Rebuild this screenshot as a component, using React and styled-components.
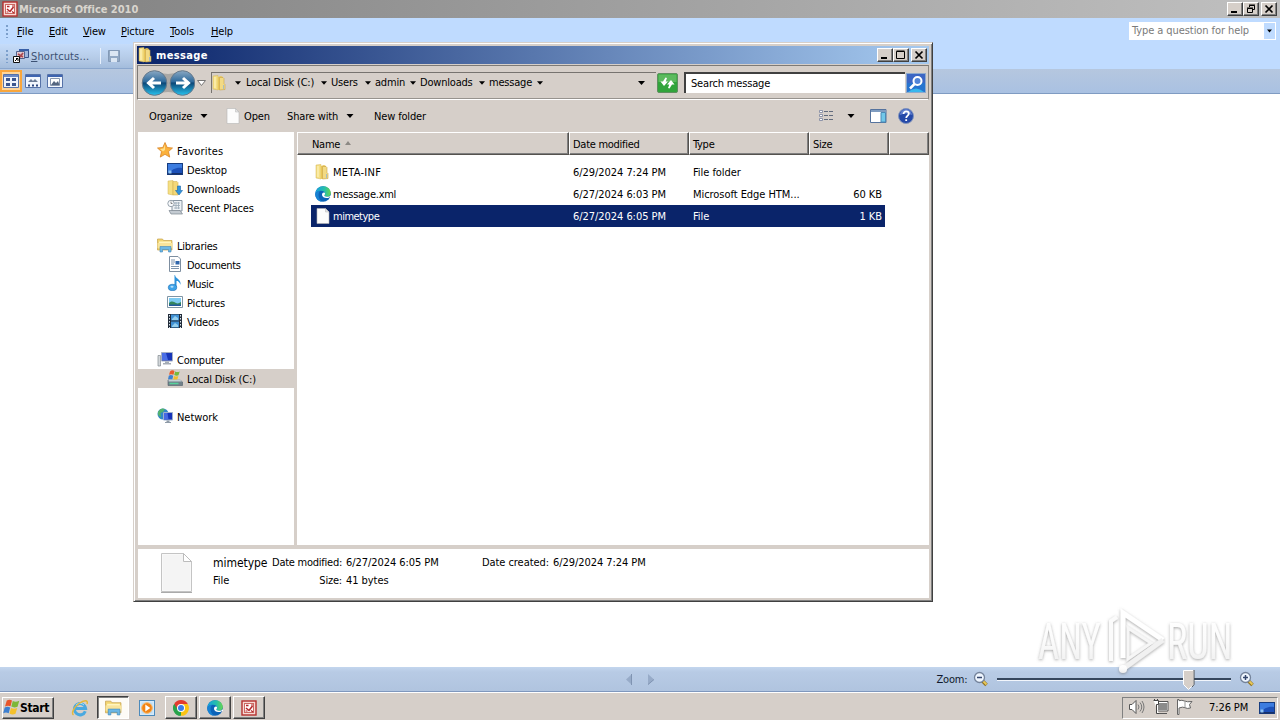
import React from 'react';
import styled, { createGlobalStyle, css } from 'styled-components';

const face = '#d6cfc9';

const GlobalStyle = createGlobalStyle`
    * {
        box-sizing: border-box;
    }
    body {
        margin: 0;
        overflow: hidden;
        font-family: "DejaVu Sans Condensed", "DejaVu Sans", sans-serif;
        font-stretch: condensed;
        font-size: 11px;
        line-height: 14px;
        letter-spacing: -0.2px;
        color: #000;
        white-space: nowrap;
        cursor: default;
    }
    svg {
        display: block;
        flex: none;
    }
`;

const raised = css`
    background: ${face};
    border: 1px solid;
    border-color: #fff #404040 #404040 #fff;
    box-shadow: inset -1px -1px 0 #808080;
`;

/* drops the label a little below the middle, the icon stays above it */
const lowText = css`
    padding-top: 2px;
    & > svg {
        margin-top: -3px;
    }
`;

const Screen = styled.div`
    position: relative;
    display: flex;
    flex-direction: column;
    width: 1280px;
    height: 720px;
    background: #fff;
    overflow: hidden;
`;

/* ---------- Office window ---------- */

const OfficeTitle = styled.header`
    display: flex;
    align-items: center;
    height: 18px;
    padding: 0 3px 0 2px;
    gap: 1px;
    background: linear-gradient(90deg, #808080, #c0c0c0);
    color: #d9d5ce;
`;

const Title = styled.span`
    flex: 1;
    padding-top: 2px;
    font-weight: bold;
    letter-spacing: ${props => props.$spacing || '0.35px'};
`;

const WindowButtons = styled.div`
    display: flex;
    button:last-child {
        margin-left: 2px;
    }
`;

const WindowButton = styled.button`
    ${raised}
    display: flex;
    align-items: center;
    justify-content: center;
    width: 16px;
    height: 14px;
    padding: 0;
`;

const MenuBar = styled.nav`
    display: flex;
    align-items: center;
    height: 26px;
    padding: 0 4px 0 6px;
    background: #bfdbff;
`;

const MenuItem = styled.span`
    width: ${props => props.$width}px;
    padding-top: 2px;
    letter-spacing: ${props => props.$spacing};
    &::first-letter {
        text-decoration: underline;
    }
`;

const Grip = styled.i`
    width: 2px;
    height: 13px;
    margin-right: ${props => props.$after}px;
    background: repeating-linear-gradient(180deg, #7c9fcb 0 2px, transparent 2px 4px);
`;

const HelpBox = styled.div`
    display: flex;
    align-items: center;
    justify-content: space-between;
    width: 147px;
    height: 18px;
    margin-left: auto;
    padding-left: 3px;
    background: #fff;
    color: #7a7a7a;
    letter-spacing: -0.08px;
`;

const HelpArrow = styled.div`
    display: flex;
    align-items: center;
    justify-content: center;
    width: 11px;
    height: 16px;
    margin-right: 1px;
    background: #bfdbff;
`;

const ShortcutBar = styled.div`
    height: 25px;
    background: #bfdbff;
`;

const ShortcutTools = styled.div`
    display: flex;
    align-items: center;
    width: 600px;
    height: 25px;
    padding-left: 6px;
    background: linear-gradient(180deg, #c5dcfa, #b5cbe7 60%, #a3bcdc);
    border-bottom: 1px solid #8aa6cd;
    color: #3c5173;
`;

const ShortcutText = styled.span`
    margin: 0 6px 0 2px;
    padding: 2px 11px 0 0;
    border-right: 1px solid #e8f1fd;
    letter-spacing: 0.12px;
    &::first-letter {
        text-decoration: underline;
    }
`;

const ViewBar = styled.div`
    display: flex;
    align-items: center;
    height: 25px;
    background: linear-gradient(180deg, #b5c7df, #a9c1e2);
    border-bottom: 1px solid #7f9bc2;
`;

const ViewButton = styled.div`
    display: flex;
    align-items: center;
    justify-content: center;
    width: 22px;
    height: 22px;
    ${props => props.$active && css`
        background: #ffd69a;
        border: 2px solid #f9a63c;
    `}
`;

const Canvas = styled.main`
    flex: 1;
    background: #fff;
`;

const StatusBar = styled.footer`
    display: flex;
    align-items: center;
    height: 25px;
    padding: 0 25px 0 625px;
    background: linear-gradient(180deg, #c3d6ee 0, #b8cbe5 20%, #b0c4df);
    border-bottom: 1px solid #8098bd;
    color: #10182c;
`;

const Pager = styled.div`
    display: flex;
    gap: 14px;
    width: 312px;
`;

const ZoomLabel = styled.span`
    width: 37px;
    padding-top: 2px;
`;

const Track = styled.div`
    position: relative;
    width: 234px;
    height: 3px;
    margin: 0 8px 0 8px;
    background: #35465d;
    border-bottom: 1px solid #f2f6fc;
`;

const Thumb = styled.div`
    position: absolute;
    left: 186px;
    top: -8px;
`;

/* ---------- Explorer window ---------- */

const Explorer = styled.section`
    position: absolute;
    left: 133px;
    top: 42px;
    width: 800px;
    height: 560px;
    display: flex;
    flex-direction: column;
    padding: 2px;
    background: ${face};
    border: 1px solid;
    border-color: ${face} #404040 #404040 ${face};
    box-shadow: inset 1px 1px 0 #fff, inset -1px -1px 0 #808080;
`;

const ExplorerTitle = styled.header`
    display: flex;
    align-items: center;
    height: 18px;
    margin: 1px 1px 0;
    padding: 0 2px 0 1px;
    gap: 2px;
    background: linear-gradient(90deg, #0a246a, #a6caf0);
    color: #fff;
`;

const AddressBar = styled.div`
    display: flex;
    align-items: center;
    height: 35px;
    margin: 1px 1px 0 1px;
    padding-left: 3px;
    border: 1px solid;
    border-color: #7d7a76 #8c8984 #fff #7d7a76;
    box-shadow: inset 0 -1px 0 #97938e;
`;

const Path = styled.div`
    display: flex;
    align-items: center;
    width: 445px;
    height: 21px;
    margin-left: 5px;
    border-left: 1px solid #77736f;
    border-top: 1px solid #77736f;
`;

const Crumb = styled.span`
    display: flex;
    align-items: center;
    width: ${props => props.$width}px;
    margin-right: 4px;
    svg {
        margin-left: auto;
    }
`;

const Refresh = styled.div`
    margin: 0 6px 0 1px;
`;

const Search = styled.div`
    width: 221px;
    height: 21px;
    padding: 3px 5px;
    background: #fff;
    border: 1px solid #404040;
    border-width: 2px 0 0 2px;
    margin-right: 1px;
    letter-spacing: -0.18px;
`;

const CommandBar = styled.div`
    display: flex;
    align-items: center;
    height: 32px;
    padding: 0 16px 0 13px;
`;

const Command = styled.span`
    width: ${props => props.$width}px;
    padding-top: 2px;
    letter-spacing: -0.15px;
`;

const ToolIcons = styled.div`
    display: flex;
    align-items: center;
    margin-left: auto;
`;

const Gap = styled.i`
    width: ${props => props.$size}px;
    flex: none;
`;

const Body = styled.div`
    display: flex;
    height: 413px;
    margin-left: 2px;
`;

const NavPane = styled.aside`
    width: 156px;
    padding-top: 9px;
    background: #fff;
`;

const NavRow = styled.div`
    ${lowText}
    display: flex;
    align-items: center;
    gap: 4px;
    height: 19px;
    padding-left: ${props => (props.$child ? 29 : 19)}px;
    letter-spacing: ${props => props.$spacing || '-0.15px'};
    background: ${props => (props.$selected ? face : 'transparent')};
`;

const FilePane = styled.div`
    width: 632px;
    margin-left: 3px;
    background: #fff;
`;

const columns = css`
    display: grid;
    grid-template-columns: ${props => props.$columns};
`;

const HeaderRow = styled.div`
    ${columns}
    height: 23px;
`;

const HeaderCell = styled.div`
    ${raised}
    ${lowText}
    display: flex;
    align-items: center;
    gap: 5px;
    padding-left: ${props => props.$pad || 3}px;
    border-color: #fff #55524e #55524e #fff;
    letter-spacing: -0.28px;
`;

const Files = styled.div`
    padding: 6px 0 0 14px;
`;

const FileRow = styled.div`
    ${columns}
    align-items: center;
    width: 574px;
    height: 22px;
    letter-spacing: -0.05px;
    color: ${props => (props.$selected ? '#fff' : '#000')};
    background: ${props => (props.$selected ? '#0a246a' : 'transparent')};
`;

const FileCell = styled.span`
    padding-top: 2px;
    letter-spacing: ${props => props.$spacing};
`;

const FileName = styled(FileCell)`
    ${lowText}
    display: flex;
    align-items: center;
    gap: 2px;
    padding-left: 4px;
`;

const FileSize = styled(FileCell)`
    padding-right: 3px;
    text-align: right;
`;

const Details = styled.div`
    display: flex;
    height: 49px;
    margin: 4px 1px 0 2px;
    padding: 4px 0 0 23px;
    background: #fff;
`;

const DetailGrid = styled.div`
    display: grid;
    grid-template-columns: 59px 70px 4px 136px 67px 4px auto;
    grid-template-rows: 18px 18px;
    align-items: center;
    margin: 1px 0 0 19px;
    letter-spacing: -0.06px;
`;

const DetailName = styled.span`
    padding-bottom: 1px;
    font-size: 12px;
    letter-spacing: -0.05px;
`;

const DetailLabel = styled.span`
    justify-self: end;
    letter-spacing: ${props => props.$spacing};
`;

/* ---------- Taskbar ---------- */

const Taskbar = styled.div`
    display: flex;
    align-items: center;
    height: 28px;
    padding: 2px 2px 0;
    background: ${face};
    border-top: 1px solid #fff;
`;

const StartButton = styled.button`
    ${raised}
    display: flex;
    align-items: center;
    width: 52px;
    height: 22px;
    padding: 0;
    margin-right: 18px;
    font: bold 12px "DejaVu Sans Condensed", sans-serif;
    letter-spacing: -0.3px;
`;

const TaskIcon = styled.div`
    display: flex;
    align-items: center;
    justify-content: center;
    width: 16px;
    margin-right: ${props => props.$after}px;
`;

const TaskButton = styled.button`
    ${raised}
    display: flex;
    align-items: center;
    justify-content: center;
    width: 32px;
    height: 23px;
    padding: 0;
    margin-right: ${props => props.$after || 2}px;
    ${props => props.$pressed && css`
        background: #fdfbf6;
        border-color: #404040 #fff #fff #404040;
        box-shadow: inset 1px 1px 0 #808080;
    `}
`;

const Tray = styled.div`
    display: flex;
    align-items: center;
    width: 156px;
    height: 22px;
    margin-left: auto;
    padding-left: 5px;
    border: 1px solid;
    border-color: #808080 #fff #fff #808080;
`;

const Clock = styled.span`
    margin: 0 11px 0 16px;
    letter-spacing: -0.1px;
`;

const Watermark = styled.div`
    position: absolute;
    left: 1030px;
    top: 604px;
`;

/* ---------- Icons ---------- */

const Svg = ({ w = 16, h = w, box, children }) => (
    <svg width={w} height={h} viewBox={box || `0 0 ${w} ${h}`}>{children}</svg>
);

const Down = ({ color = '#000', w = 7 }) => (
    <Svg w={w} h={4} box="0 0 7 4"><path d="M0 0h7L3.5 4z" fill={color} /></Svg>
);

const MinimizeGlyph = () => <Svg w={10} h={10}><path d="M1 7h6v2H1z" /></Svg>;
const MaximizeGlyph = () => (
    <Svg w={10} h={10}><path d="M.5 1.5h8v7h-8zM.5 1h8" fill="none" stroke="#000" /></Svg>
);
const RestoreGlyph = () => (
    <Svg w={10} h={10}>
        <path d="M3.5 3V1.5h5v4H7M3 1h6M1.5 4.5h5v4h-5zM1 4h6" fill="none" stroke="#000" />
    </Svg>
);
const CloseGlyph = () => (
    <Svg w={10} h={10}><path d="M1.5 1.5l7 7m0-7l-7 7" stroke="#000" strokeWidth="1.7" /></Svg>
);

const OfficeIcon = () => (
    <Svg>
        <rect x="1" y="1" width="14" height="14" fill="#f6d9d4" stroke="#b5302e" strokeWidth="1.4" />
        <rect x="3.500" y="3.500" width="9" height="9" fill="#fffaf8" stroke="#cc6a62" />
        <path d="M5 5.500h2.500M5 8l3 2.500L11.500 6" fill="none" stroke="#b3262b" strokeWidth="1.500" />
        <path d="M10 5h2M4.500 11h2M10 10.500l2 1.500" stroke="#b3262b" strokeWidth="1.200" />
    </Svg>
);

const FolderIcon = () => (
    <Svg>
        <path d="M1 1l5-.5V15l-5-1z" fill="#f5df83" stroke="#d2b356" strokeWidth=".5" />
        <path d="M6 2l3-1 2 1v12l-5 1z" fill="#e9c658" />
        <path d="M7.500 2.500h3.500l1 1v5l1 1v5l-5.500.5z" fill="#f2da84" stroke="#c9a548" strokeWidth=".6" />
        <path d="M3 2v11" stroke="#fff6c8" />
        <path d="M11.500 10v4" stroke="#a9bcc0" />
    </Svg>
);

const PageIcon = ({ w = 14, h = 16 }) => (
    <Svg w={w} h={h} box="0 0 14 16">
        <path d="M1 .5h8.500L13 4v11.500H1z" fill="#fcfcfc" stroke="#b5b5b5" strokeWidth=".6" />
        <path d="M9.500.5V4H13z" fill="#e3e3e3" stroke="#b5b5b5" strokeWidth=".5" />
    </Svg>
);

const BigPage = () => (
    <Svg w={33} h={41}>
        <path d="M.500.5h22l8 8v30h-30z" fill="#f8f8f8" stroke="#c4c4c4" />
        <path d="M2 37V2h20v7h7v28z" fill="#f4f4f4" />
        <path d="M22.500.5v8h8z" fill="#fff" stroke="#bcbcbc" />
        <path d="M0 39.500h31" stroke="#aaa" />
    </Svg>
);

const EdgeIcon = ({ size = 16 }) => (
    <Svg w={size} box="0 0 16 16">
        <defs>
            <linearGradient id="edgeTop" x1="0" x2="1">
                <stop offset="0" stopColor="#159fe0" />
                <stop offset=".6" stopColor="#27bfa8" />
                <stop offset="1" stopColor="#68d64c" />
            </linearGradient>
        </defs>
        <circle cx="8" cy="8" r="7.800" fill="#0b63b8" />
        <path d="M.3 7.500C1 3 4.200.2 8.200.2c4.400 0 7.500 3.200 7.600 6.700 0 2.400-1.700 3.900-4 3.900-1.600 0-2.500-.6-2.500-1.200 0-.5.8-.8.8-2C10.100 6 8.400 4.700 6 4.700 3 4.700.9 6.200.3 7.500z" fill="url(#edgeTop)" />
        <path d="M7.600 7c-1.100 1.200-.6 3.300.9 4.300 1.800 1.200 4.400 1 6.600-.4l.9.400V9.200c-.9 1.200-2.400 1.600-4.200 1.600-1.600 0-2.500-.6-2.500-1.200 0-.5.8-.8.8-2C10 6.300 8.500 6 7.600 7z" fill="#fff" />
        <path d="M.3 8c.4-2 2.300-3.300 5-3.300C3 6.500 2.500 12 7 15.700 3 15.400 0 12 .3 8z" fill="#1782d3" />
    </Svg>
);

const ChromeIcon = () => (
    <Svg>
        <path d="M8 8L1.200 4A7.800 7.800 0 0 1 14.800 4z" fill="#e23b2e" />
        <path d="M8 8l6.800-4A7.800 7.800 0 0 1 8 15.800z" fill="#fbc413" />
        <path d="M8 8v7.800A7.800 7.800 0 0 1 1.200 4z" fill="#29a34a" />
        <path d="M8 4h6.800L11 10z" fill="#fbc413" />
        <path d="M1.200 4L5 10l3-2V4z" fill="#e23b2e" />
        <path d="M1.200 4l3.300 6 3.500 2-1 3.500A7.800 7.800 0 0 1 1.200 4z" fill="#29a34a" />
        <circle cx="8" cy="8" r="4" fill="#fff" />
        <circle cx="8" cy="8" r="3" fill="#3b7de8" />
    </Svg>
);

const IeIcon = () => (
    <Svg w={18}>
        <path d="M14.300 12.200A5.600 5.600 0 1 1 14.600 9.500H5" fill="none" stroke="#49a9e0" strokeWidth="3" />
        <path d="M5 6a5.500 5.500 0 0 1 8 0" fill="none" stroke="#a7e1f8" />
        <path d="M2.500 16c-2.500-2 .5-8 5.500-11.500S17.500.8 16 5" fill="none" stroke="#e5b83c" strokeWidth="1.500" />
    </Svg>
);

const LibraryIcon = ({ size = 16 }) => (
    <Svg w={size} box="0 0 16 16">
        <path d="M.5 2h5l1 1.500h8.500V13H.5z" fill="#f2d571" stroke="#c6a04b" strokeWidth=".7" />
        <path d="M2 4.500h12v3H2z" fill="#fff5bf" />
        <path d="M.5 6h15v5H.5z" fill="#f8e49b" />
        <path d="M3 15v-5.500h11V15h-2.500v-2.500h-6V15z" fill="#6db8e5" stroke="#3f87bb" strokeWidth=".6" />
    </Svg>
);

const MediaIcon = () => (
    <Svg>
        <rect x=".5" y=".5" width="15" height="15" fill="#d5eafa" stroke="#4c8abb" />
        <rect x="2.500" y="2.500" width="11" height="11" fill="#bcdcf3" />
        <circle cx="8" cy="8" r="5.300" fill="#f08416" stroke="#ffb864" />
        <path d="M6.300 4.500v7l5-3.500z" fill="#fff" />
    </Svg>
);

const FlagIcon = () => (
    <Svg w={17}>
        <path d="M3.800 1.500c2-1 3.500-1 5.200 0L7.500 7.300c-2-1-3.500-.8-5.500.2z" fill="#e8552a" />
        <path d="M9.800 2c2 1 3.700 1 6.500-.3L14.500 7.700c-2.300 1-4.200.9-6.200-.1z" fill="#7db738" />
        <path d="M1.700 8.500c2-1 3.700-.9 5.500 0L5.700 14.300c-2-1-3.500-1-5.500 0z" fill="#3d7fd0" />
        <path d="M8 9c2 1 4 1 6.200 0l-1.700 5.700c-2.200 1.200-4 .9-6-.1z" fill="#f5c12b" />
    </Svg>
);

const StarIcon = () => (
    <Svg>
        <path d="M8 .5l2.200 5 5.300.5-4 3.600 1.200 5.500L8 12.300l-4.700 2.800 1.200-5.500L.5 6l5.300-.5z" fill="#fbb13b" stroke="#d98425" strokeWidth=".8" />
        <path d="M8 2.500L6.500 6.500l-3.500.4 3 2.500L8 8z" fill="#ffe08a" />
    </Svg>
);

const DesktopIcon = ({ w = 16, h = 16 }) => (
    <Svg w={w} h={h} box="0 0 16 16">
        <rect x=".5" y="2.500" width="15" height="11" fill="#1c50b8" stroke="#173d80" />
        <path d="M1 3h14v4C9 6 5 9 1 12z" fill="#3d7de0" />
        <path d="M1 12h14v1.500H1z" fill="#16316a" />
        <path d="M1.500 9.500h3v3h-3z" fill="#8ec3f0" />
    </Svg>
);

const DownloadsIcon = () => (
    <Svg>
        <path d="M1 1l5-.5V15l-5-1z" fill="#f5df83" stroke="#d2b356" strokeWidth=".5" />
        <path d="M6 1.500h4l1 1V15H6z" fill="#f4d878" stroke="#cda944" strokeWidth=".5" />
        <path d="M10.500 6h3v4.500h2L12 15l-3.500-4.500h2z" fill="#3294de" stroke="#1c68aa" strokeWidth=".6" />
    </Svg>
);

const RecentIcon = () => (
    <Svg>
        <path d="M5 1.500h10V12H5z" fill="#eef2f5" stroke="#8794a0" />
        <path d="M7 4h6M7 6.500h6M7 9h6M9 3v7M11.500 3v7" stroke="#9aa9b6" strokeWidth=".8" />
        <path d="M2 11.500h11l2.500 3.500H4z" fill="#c4cbd2" stroke="#7c8790" strokeWidth=".7" />
        <circle cx="4" cy="4.500" r="3.200" fill="#f8fafc" stroke="#97a3ad" />
        <path d="M4 2.500v2h1.500" fill="none" stroke="#555" strokeWidth=".7" />
    </Svg>
);

const DocumentIcon = () => (
    <Svg>
        <path d="M2.500.5h8.500L13.500 3v12.500h-11z" fill="#fff" stroke="#7d8ea0" />
        <path d="M4 4h4M4 6h4M4 10.500h8M4 12.500h8" stroke="#7c94ae" />
        <path d="M8.500 5h4v3.500h-4z" fill="#2f66ac" />
        <path d="M4 8h3" stroke="#7c94ae" />
    </Svg>
);

const MusicIcon = () => (
    <Svg>
        <path d="M8 0c.5 4 6.500 4 5.500 10C12.500 6.500 10.500 6 9.500 6v6.500H7.500V0z" fill="#2d93dc" />
        <ellipse cx="5.500" cy="12.500" rx="4.200" ry="3.200" fill="#3ca2e8" stroke="#1d6fb4" strokeWidth=".6" />
        <ellipse cx="5" cy="11.700" rx="1.600" ry="1" fill="#b5e0fa" />
    </Svg>
);

const PictureIcon = () => (
    <Svg>
        <path d="M.5 2.500h15v11H.5z" fill="#fff" stroke="#7f95a5" />
        <path d="M2 4h12v8H2z" fill="#7ecbf2" />
        <path d="M2 9c3-3 5-1 7 0s3 0 5-1v4H2z" fill="#34865d" />
        <path d="M2 10.500h12V12H2z" fill="#235aa0" />
    </Svg>
);

const VideoIcon = () => (
    <Svg>
        <path d="M1 1h14v14H1z" fill="#222c3a" />
        <path d="M4 1.500h8v6H4zM4 8.500h8v6H4z" fill="#4191d4" />
        <path d="M5 6l3-3 3 2v2H5zM5 13l3-3 3 2v2H5z" fill="#94cfee" />
        <path d="M2.500 2v13M13.500 2v13" stroke="#dbe6ee" strokeDasharray="1.500 1.500" />
    </Svg>
);

const ComputerIcon = () => (
    <Svg>
        <path d="M1 4.500h2.500V15H1z" fill="#d3d7da" stroke="#83898f" strokeWidth=".7" />
        <path d="M4.500 1.500h11v8.500h-11z" fill="#1836b8" stroke="#a4afc4" />
        <path d="M5 2h4l2 7H5z" fill="#4a6ee6" />
        <path d="M8 10.500h4V12h2v1.500H6V12h2z" fill="#a5acb5" />
    </Svg>
);

const DiskIcon = () => (
    <Svg>
        <path d="M1 10h12l2.500 2V15.500H1z" fill="#71818a" stroke="#4c5d68" strokeWidth=".6" />
        <path d="M1.500 9.500h11.500l2 2H1.500z" fill="#c3d0d4" />
        <path d="M2.500 13.500h9" stroke="#56d39b" strokeWidth="1.500" />
        <path d="M3 1.500q2-2 4.500-.5L6.500 4.800Q4 3.500 2 4.800z" fill="#ea5b2d" />
        <path d="M8.200 1.500q2 1.200 4.500 0L11.500 5.300Q9.500 6.300 7.200 5z" fill="#77b93d" />
        <path d="M1.800 5.700Q3.800 4.500 6.200 5.700l-.8 3.500H1z" fill="#3c80d1" />
        <path d="M7 6q2 1 4.300 0L10.300 9.500H6.200z" fill="#f4bd27" />
    </Svg>
);

const NetworkIcon = () => (
    <Svg>
        <circle cx="6" cy="6" r="5.500" fill="#3187c8" />
        <path d="M1 4c2-4 5-4 7-3L6 4 3.500 5 4 9C1.500 8.500.5 6.500 1 4z" fill="#52b26f" />
        <path d="M6.500 4.500h9V12h-9z" fill="#1734ba" stroke="#9fb1cc" />
        <path d="M7 5h3.500l1 6.500H7z" fill="#4869e2" />
        <path d="M9.500 12.500h3V14h1.500v1H8v-1h1.500z" fill="#8f9ba8" />
    </Svg>
);

const NavArrows = () => (
    <Svg w={54} h={28}>
        <defs>
            <linearGradient id="orb" x1="0" y1="0" x2="0" y2="1">
                <stop offset="0" stopColor="#8aa8c3" />
                <stop offset=".45" stopColor="#2e6a9c" />
                <stop offset=".5" stopColor="#0d4777" />
                <stop offset="1" stopColor="#27c2ee" />
            </linearGradient>
        </defs>
        <path d="M13 2q14 6 28 0v24q-14-6-28 0z" fill="#aaa8a5" />
        <circle cx="13.500" cy="14" r="12.300" fill="url(#orb)" stroke="#66798b" />
        <circle cx="41.500" cy="14" r="12.300" fill="url(#orb)" stroke="#66798b" />
        <path d="M20 14H8m5-5l-5.500 5 5.500 5M35 14h12m-5-5l5.500 5-5.500 5" fill="none" stroke="#fff" strokeWidth="3" />
    </Svg>
);

const RefreshIcon = () => (
    <Svg w={21} h={20}>
        <rect x=".5" y=".5" width="20" height="19" rx="1.500" fill="#31a43b" stroke="#5f8f60" />
        <path d="M1.500 1.500h18V9h-18z" fill="#5cba5e" />
        <path d="M8.500 4.500L6 8.500H3.500L7 13l4-4.500H8.700L10 5zM12.500 15.500l2.500-4h2.500L14 7l-4 4.500h2.300L11 15z" fill="#fff" />
    </Svg>
);

const SearchIcon = () => (
    <Svg w={20} h={20}>
        <rect x=".5" y=".5" width="19" height="19" fill="#2674cf" stroke="#8ca9cd" />
        <path d="M1 1h18v9H1z" fill="#3c66c4" />
        <path d="M2 19q8-7 16 0z" fill="#37b7ed" />
        <circle cx="11.500" cy="8" r="4" fill="#5285d8" stroke="#fff" strokeWidth="2" />
        <path d="M8.500 11L4 15.500" stroke="#fff" strokeWidth="2.500" />
    </Svg>
);

const ViewListIcon = () => (
    <Svg>
        <path d="M.500 2.500h3v2h-3zM.500 6.500h3v2h-3zM.500 10.500h3v2h-3z" fill="#fff" stroke="#77809a" strokeWidth=".8" />
        <path d="M5 3.500h10M5 7.500h10M5 11.500h10" stroke="#626b7c" strokeDasharray="4 1" />
    </Svg>
);

const PreviewIcon = () => (
    <Svg w={17} h={14}>
        <path d="M.5.5h15.500v13H.5z" fill="#fff" stroke="#55739e" />
        <path d="M1 1h15v2H1z" fill="#7f9cc0" />
        <path d="M11 3.500h4.500v9.500H11z" fill="#71c7e9" stroke="#4b8ab6" />
    </Svg>
);

const HelpIcon = () => (
    <Svg>
        <circle cx="8" cy="8" r="7.500" fill="#2549a8" stroke="#8295bd" />
        <path d="M2 7a6 6 0 0 1 12 0q-6-3-12 0z" fill="#617fce" />
        <path d="M5.500 6c0-3.500 5.300-3.200 5.300-.3C10.800 7.500 8.200 7.800 8.200 10M8.200 11.300v1.700" fill="none" stroke="#fff" strokeWidth="1.800" />
    </Svg>
);

const ShortcutIcon = () => (
    <Svg w={17}>
        <path d="M7.500 1.500h9v8h-9z" fill="#9db5de" stroke="#375187" />
        <path d="M7 1h10v2H7z" fill="#375fa8" />
        <path d="M4.500 3.500h8v7h-8z" fill="#e3c9cf" stroke="#52618c" />
        <path d="M6 6l5 3M11 5l-4 5" stroke="#a94850" strokeWidth="1.700" />
        <path d="M1.500 8.500h6v6h-6z" fill="#fff" stroke="#111" />
        <path d="M3 13l3-3M4 10.500h2V13" fill="none" stroke="#000" />
    </Svg>
);

const SaveIcon = () => (
    <Svg w={14}>
        <path d="M1.500 1.500h11v11h-11z" fill="#91a8c4" stroke="#8299b6" />
        <path d="M3 2h8v5H3zM4 9h6v4H4z" fill="#dbe6f3" />
    </Svg>
);

const ThumbsIcon = () => (
    <Svg w={16} h={14}>
        <path d="M.5.5h15v13H.5z" fill="#eef3fb" stroke="#5672a8" />
        <path d="M1 1h14v2H1z" fill="#6b8ac6" />
        <path d="M3 4h4v3H3zM9 4h4v3H9zM3 9h4v3H3zM9 9h4v3H9z" fill="#3b568e" />
    </Svg>
);

const FilmstripIcon = () => (
    <Svg w={16} h={14}>
        <path d="M.5.5h15v13H.5z" fill="#f3f7fd" stroke="#5672a8" />
        <path d="M1 1h14v2H1z" fill="#3e64b0" />
        <path d="M3 8l3-3 2 2 2-2 3 3z" fill="#6d7d96" />
        <path d="M3 10.500h2v2H3zM7 10.500h2v2H7zM11 10.500h2v2h-2z" fill="#2e487e" />
    </Svg>
);

const SingleIcon = () => (
    <Svg w={16} h={14}>
        <path d="M.5.5h15v13H.5z" fill="#f3f7fd" stroke="#5672a8" />
        <path d="M1 1h14v2H1z" fill="#3e64b0" />
        <path d="M3.500 4.500h9v7h-9z" fill="#fff" stroke="#8796ae" />
        <path d="M4 11l3-4 2 2 2-2 1.500 4z" fill="#54657f" />
    </Svg>
);

const Magnifier = ({ plus }) => (
    <Svg w={16}>
        <path d="M9.500 10l4 4" stroke="#8f6f1c" strokeWidth="3.500" />
        <path d="M10 10l3.500 3.500" stroke="#e8c95a" strokeWidth="1.800" />
        <circle cx="6.500" cy="6.500" r="5" fill="#eff6ff" stroke="#74839b" strokeWidth="1.300" />
        <path d={plus ? 'M4 6.500h5M6.500 4v5' : 'M4 6.500h5'} stroke="#35476d" strokeWidth="1.500" />
    </Svg>
);

const SpeakerIcon = () => (
    <Svg w={17}>
        <path d="M1.500 5.500h2.500l4-4v13l-4-4H1.500z" fill="#fff" stroke="#555" />
        <path d="M10 5.500q2 2.500 0 5M12 3.500q3.500 4.500 0 9M14 2q4 6 0 12" fill="none" stroke="#777" />
    </Svg>
);

const LanIcon = () => (
    <Svg w={17}>
        <path d="M5.500 3.500h10v8h-10z" fill="#8b8b8b" stroke="#fff" />
        <path d="M4.500 2.500h11.500v9.500H4.500zM6 14.500h9" fill="none" stroke="#555" />
        <path d="M1.500 1.500h5v4h-2v9H7" fill="#fff" stroke="#444" />
        <path d="M2.500 0v2M5.500 0v2" stroke="#444" />
    </Svg>
);

const ActionFlag = () => (
    <Svg w={17}>
        <path d="M1.500.5H3v1.200q3-1 5.500.3T16 2.500l-2.500 3 1 3.500q-3.500 1-5.500-.3T3 9v6.500H1.500z" fill="#fff" stroke="#666" />
        <path d="M9 2v6.500" stroke="#999" />
    </Svg>
);

const PagerArrow = ({ flip }) => (
    <Svg w={8} h={11}>
        <path d={flip ? 'M1 0l6 5.500L1 11z' : 'M7 0L1 5.500 7 11z'} fill="#97abc8" />
        <path d={flip ? 'M1 10.500l6-5' : 'M6.500 0v11'} stroke="#8094b2" />
    </Svg>
);

const SliderThumb = () => (
    <Svg w={12} h={20}>
        <path d="M.5.5h10v14l-5 5-5-5z" fill={face} stroke="#fff" />
        <path d="M11 0v14.500L9 17" fill="none" stroke="#4f4f4f" />
    </Svg>
);

const Logo = () => (
    <svg width="220" height="74" viewBox="0 0 220 74" overflow="visible">
        <defs>
            <filter id="soft" x="-10%" y="-10%" width="120%" height="120%">
                <feDropShadow dx="0" dy="1" stdDeviation="1.500" floodColor="#777" floodOpacity=".65" />
            </filter>
            <linearGradient id="fade" x1="0" y1="0" x2="0" y2="1">
                <stop offset="0" stopColor="#fff" />
                <stop offset=".5" stopColor="#fbfbfb" />
                <stop offset="1" stopColor="#ececec" />
            </linearGradient>
        </defs>
        <g filter="url(#soft)" fill="url(#fade)" fontFamily="Roboto" fontSize="50" letterSpacing="0">
            <text transform="translate(8 55) scale(.735 1)">ANY</text>
            <text transform="translate(137 55) scale(.765 1)">RUN</text>
            <path d="M81 57V17l6-4" fill="none" stroke="#fbfbfb" strokeWidth="4" />
            <path d="M93 54V9l40 27" fill="none" stroke="#fff" strokeWidth="5" />
            <path d="M133 36L93 65" fill="none" stroke="#f1f1f1" strokeWidth="5" />
            <path d="M98 24l23 15-23 16z" fill="none" stroke="#f6f6f6" strokeWidth="3" />
            <circle cx="93" cy="65" r="4" />
        </g>
    </svg>
);

/* ---------- Data ---------- */

const menus = [
    ['File', 32, '0px'], ['Edit', 34, '-0.2px'], ['View', 38, '-0.2px'],
    ['Picture', 49, '-0.1px'], ['Tools', 41, '0px'], ['Help', 30, '-0.2px'],
];

const crumbs = [
    ['Local Disk (C:)', 81], ['Users', 40], ['admin', 41], ['Downloads', 65], ['message', 54],
];

const places = [
    { name: 'Favorites', icon: StarIcon, spacing: '0.2px' },
    { name: 'Desktop', icon: DesktopIcon, child: true },
    { name: 'Downloads', icon: DownloadsIcon, child: true },
    { name: 'Recent Places', icon: RecentIcon, child: true },
    null,
    { name: 'Libraries', icon: LibraryIcon, spacing: '-0.25px' },
    { name: 'Documents', icon: DocumentIcon, child: true, spacing: '-0.3px' },
    { name: 'Music', icon: MusicIcon, child: true, spacing: '-0.3px' },
    { name: 'Pictures', icon: PictureIcon, child: true },
    { name: 'Videos', icon: VideoIcon, child: true },
    null,
    { name: 'Computer', icon: ComputerIcon, spacing: '-0.25px' },
    { name: 'Local Disk (C:)', icon: DiskIcon, child: true, selected: true },
    null,
    { name: 'Network', icon: NetworkIcon, spacing: '-0.05px' },
];

const files = [
    { name: 'META-INF', icon: FolderIcon, date: '6/29/2024 7:24 PM', type: 'File folder', size: '', spacing: '0.25px' },
    { name: 'message.xml', icon: EdgeIcon, date: '6/27/2024 6:03 PM', type: 'Microsoft Edge HTM...', size: '60 KB', spacing: '-0.25px' },
    { name: 'mimetype', icon: PageIcon, date: '6/27/2024 6:05 PM', type: 'File', size: '1 KB', spacing: '-0.5px', selected: true },
];

function Controls({ restore })
{
    return (
        <WindowButtons>
            <WindowButton><MinimizeGlyph /></WindowButton>
            <WindowButton>{restore ? <RestoreGlyph /> : <MaximizeGlyph />}</WindowButton>
            <WindowButton><CloseGlyph /></WindowButton>
        </WindowButtons>
    );
}

function ExplorerWindow()
{
    return (
        <Explorer>
            <ExplorerTitle>
                <FolderIcon />
                <Title>message</Title>
                <Controls />
            </ExplorerTitle>
            <AddressBar>
                <NavArrows />
                <Gap $size={2} />
                <Svg w={9} h={6}><path d="M.5.5h8l-4 5z" fill="#fff" stroke="#777" /></Svg>
                <Path>
                    <FolderIcon />
                    <Gap $size={7} />
                    <Down w={6} />
                    <Gap $size={5} />
                    {crumbs.map(([name, width]) => (
                        <Crumb key={name} $width={width}>{name}<Down w={6} /></Crumb>
                    ))}
                    <Gap $size={91} />
                    <Down />
                </Path>
                <Refresh><RefreshIcon /></Refresh>
                <Search>Search message</Search>
                <SearchIcon />
            </AddressBar>
            <CommandBar>
                <Command $width={51}>Organize</Command>
                <Down w={8} />
                <Gap $size={18} />
                <PageIcon />
                <Gap $size={4} />
                <Command $width={43}>Open</Command>
                <Command $width={59}>Share with</Command>
                <Down w={8} />
                <Gap $size={20} />
                <Command $width={60}>New folder</Command>
                <ToolIcons>
                    <ViewListIcon />
                    <Gap $size={12} />
                    <Down w={8} />
                    <Gap $size={15} />
                    <PreviewIcon />
                    <Gap $size={11} />
                    <HelpIcon />
                </ToolIcons>
            </CommandBar>
            <Body>
                <NavPane>
                    {places.map((place, i) => (
                        <NavRow key={i} $child={place?.child} $selected={place?.selected} $spacing={place?.spacing}>
                            {place && <place.icon />}
                            {place?.name}
                        </NavRow>
                    ))}
                </NavPane>
                <FilePane>
                    <HeaderRow $columns="272px 120px 120px 80px 40px">
                        <HeaderCell $pad={14}>
                            Name
                            <Svg w={6} h={4}><path d="M0 4l3-4 3 4z" fill="#8c8984" /></Svg>
                        </HeaderCell>
                        <HeaderCell>Date modified</HeaderCell>
                        <HeaderCell>Type</HeaderCell>
                        <HeaderCell>Size</HeaderCell>
                        <HeaderCell />
                    </HeaderRow>
                    <Files>
                        {files.map(file => (
                            <FileRow key={file.name} $columns="262px 120px 120px 72px" $selected={file.selected}>
                                <FileName $spacing={file.spacing}><file.icon w={16} />{file.name}</FileName>
                                <FileCell>{file.date}</FileCell>
                                <FileCell>{file.type}</FileCell>
                                <FileSize>{file.size}</FileSize>
                            </FileRow>
                        ))}
                    </Files>
                </FilePane>
            </Body>
            <Details>
                <BigPage />
                <DetailGrid>
                    <DetailName>mimetype</DetailName>
                    <DetailLabel $spacing="-0.25px">Date modified:</DetailLabel>
                    <i />
                    <span>6/27/2024 6:05 PM</span>
                    <DetailLabel>Date created:</DetailLabel>
                    <i />
                    <span>6/29/2024 7:24 PM</span>
                    <span>File</span>
                    <DetailLabel $spacing="-0.2px">Size:</DetailLabel>
                    <i />
                    <span>41 bytes</span>
                </DetailGrid>
            </Details>
        </Explorer>
    );
}

export default function App()
{
    return (
        <Screen>
            <GlobalStyle />
            <OfficeTitle>
                <OfficeIcon />
                <Title $spacing="-0.03px">Microsoft Office 2010</Title>
                <Controls restore />
            </OfficeTitle>
            <MenuBar>
                <Grip $after={9} />
                {menus.map(([name, width, spacing]) => (
                    <MenuItem key={name} $width={width} $spacing={spacing}>{name}</MenuItem>
                ))}
                <HelpBox>
                    Type a question for help
                    <HelpArrow><Down w={5} /></HelpArrow>
                </HelpBox>
            </MenuBar>
            <ShortcutBar>
                <ShortcutTools>
                    <Grip $after={4} />
                    <ShortcutIcon />
                    <ShortcutText>Shortcuts...</ShortcutText>
                    <SaveIcon />
                </ShortcutTools>
            </ShortcutBar>
            <ViewBar>
                <ViewButton $active><ThumbsIcon /></ViewButton>
                <ViewButton><FilmstripIcon /></ViewButton>
                <ViewButton><SingleIcon /></ViewButton>
            </ViewBar>
            <Canvas />
            <StatusBar>
                <Pager>
                    <PagerArrow />
                    <PagerArrow flip />
                </Pager>
                <ZoomLabel>Zoom:</ZoomLabel>
                <Magnifier />
                <Track><Thumb><SliderThumb /></Thumb></Track>
                <Magnifier plus />
            </StatusBar>
            <Taskbar>
                <StartButton><FlagIcon />Start</StartButton>
                <TaskIcon $after={9}><IeIcon /></TaskIcon>
                <TaskButton $pressed $after={10}><LibraryIcon size={17} /></TaskButton>
                <TaskIcon $after={10}><MediaIcon /></TaskIcon>
                <TaskButton><ChromeIcon /></TaskButton>
                <TaskButton><EdgeIcon /></TaskButton>
                <TaskButton><OfficeIcon /></TaskButton>
                <Tray>
                    <SpeakerIcon />
                    <Gap $size={7} />
                    <LanIcon />
                    <Gap $size={7} />
                    <ActionFlag />
                    <Clock>7:26 PM</Clock>
                    <DesktopIcon />
                </Tray>
            </Taskbar>
            <ExplorerWindow />
            <Watermark><Logo /></Watermark>
        </Screen>
    );
}
